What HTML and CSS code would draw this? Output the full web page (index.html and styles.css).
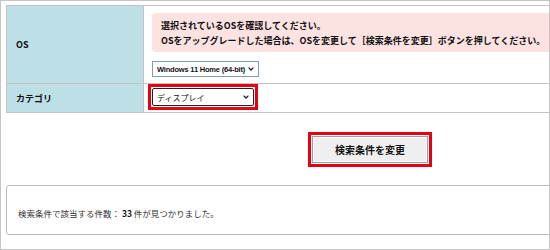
FILE: index.html
```html
<!DOCTYPE html>
<html lang="ja">
<head>
<meta charset="utf-8">
<title>検索条件</title>
<link rel="stylesheet" href="styles.css">
</head>
<body>
<div class="frame">
  <table class="cond">
    <tr class="row-os">
      <th>OS</th>
      <td>
        <div class="notice">選択されているOSを確認してください。<br>OSをアップグレードした場合は、OSを変更して［検索条件を変更］ボタンを押してください。</div>
        <div class="sel sel-os">
          <select><option>Windows 11 Home (64-bit)</option></select>
          <svg class="chev" width="6" height="4" viewBox="0 0 6 4"><polyline points="0.6,0.6 3,3 5.4,0.6" fill="none" stroke="#222" stroke-width="1.3"/></svg>
        </div>
      </td>
    </tr>
    <tr class="row-cat">
      <th>カテゴリ</th>
      <td>
        <div class="hl-sel">
          <div class="sel sel-cat">
            <select><option>ディスプレイ</option></select>
            <svg class="chev" width="6" height="4" viewBox="0 0 6 4"><polyline points="0.6,0.6 3,3 5.4,0.6" fill="none" stroke="#222" stroke-width="1.3"/></svg>
          </div>
        </div>
      </td>
    </tr>
  </table>
  <div class="actions">
    <span class="hl-btn"><button type="button">検索条件を変更</button></span>
  </div>
  <div class="result">検索条件で該当する件数： <b>33</b> 件が見つかりました。</div>
</div>
</body>
</html>
```
FILE: styles.css
```css
body {
  margin: 0;
  font-family: "Noto Sans CJK JP", sans-serif;
  background: #fff;
}
.frame {
  width: 550px;
  height: 250px;
  box-sizing: border-box;
  border: 1px solid #c6c6c6;
  padding: 4px 0 0 5px;
  overflow: hidden;
  background: #fff;
}
.cond {
  border-collapse: collapse;
  width: 720px;
}
.cond th,
.cond td {
  border: 1px solid #c3c3c3;
  padding: 0;
}
.cond th {
  width: 127px;
  padding-left: 9px;
  background: #bde0e6;
  text-align: left;
  font-size: 9px;
  font-weight: bold;
  color: #111;
  vertical-align: middle;
}
.row-os td {
  padding: 7px 0 6px 8px;
}
.row-cat td {
  padding: 0 0 2px 4px;
}
.notice {
  background: #fde2e2;
  border-radius: 4px;
  padding: 5px 9px 4px;
  font-size: 9px;
  line-height: 15px;
  font-weight: bold;
  color: #111;
  white-space: nowrap;
}
.sel {
  position: relative;
  display: block;
  width: max-content;
}
.sel-os {
  margin-top: 9px;
}
.hl-sel {
  display: block;
  width: max-content;
  border: 3px solid #e60012;
  padding: 1px;
}
.sel select {
  appearance: none;
  -webkit-appearance: none;
  display: block;
  margin: 0;
  background: #fff;
  color: #111;
  box-sizing: border-box;
}
.sel-os select {
  width: 107px;
  height: 16px;
  border: 1px solid #7f9dbb;
  border-radius: 0;
  padding: 0 4px 0 4px;
  font-family: "Liberation Sans", Arial, sans-serif;
  font-size: 7.5px;
  font-weight: bold;
  letter-spacing: -0.2px;
}
.sel-cat select {
  width: 102px;
  height: 18px;
  border: 1px solid #222;
  border-radius: 2px;
  padding: 0 12px 0 4px;
  font-family: "Noto Sans CJK JP", sans-serif;
  font-size: 8px;
}
.chev {
  position: absolute;
  top: 50%;
  margin-top: -2px;
}
.sel-os .chev {
  right: 5px;
}
.sel-cat .chev {
  right: 5px;
}
.actions {
  margin-top: 19px;
  padding-left: 302px;
  height: 35px;
}
.hl-btn {
  display: inline-block;
  border: 3px solid #e60012;
  padding: 1px;
}
.hl-btn button {
  display: block;
  width: 116px;
  height: 27px;
  margin: 0;
  padding: 0;
  background: #efefef;
  border: 1px solid #a0a0a0;
  box-shadow: inset 0 0 0 1px #fafafa;
  font-family: "Noto Sans CJK JP", sans-serif;
  font-size: 10px;
  font-weight: bold;
  color: #111;
}
.result {
  margin-top: 18px;
  width: 720px;
  box-sizing: border-box;
  border: 1px solid #bcbcbc;
  border-radius: 3px;
  padding: 20px 11px 13px;
  font-size: 8.5px;
  line-height: 15px;
  color: #333;
}
.result b {
  color: #111;
}
```
